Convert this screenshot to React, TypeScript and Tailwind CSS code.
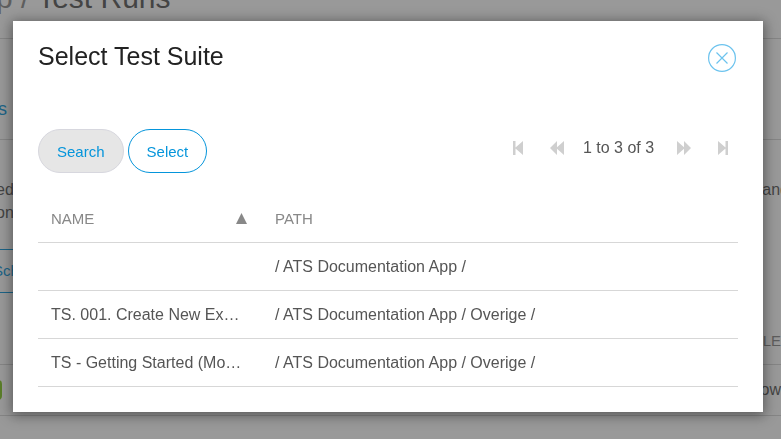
import React from "react";

const rows = [
  { name: "", path: "/ ATS Documentation App /" },
  { name: "TS. 001. Create New Ex…", path: "/ ATS Documentation App / Overige /" },
  { name: "TS - Getting Started (Mo…", path: "/ ATS Documentation App / Overige /" },
];

function PagerButton({ label, path, width }: { label: string; path: string; width: number }) {
  return (
    <button type="button" aria-label={label} disabled className="flex h-6 items-center text-[#cfcfcf]">
      <svg width={width} height="14" viewBox={`0 0 ${width} 14`} fill="currentColor">
        <path d={path} />
      </svg>
    </button>
  );
}

function PageBehind() {
  return (
    <div aria-hidden="true" className="flex h-screen flex-col overflow-hidden text-base text-[#555]">
      <div className="flex h-[39px] shrink-0 items-end border-b border-[#d7d7d7] pb-[22px]">
        <div className="-ml-1 text-[30px] leading-9 text-[#555]">
          <span className="text-[#888]">p / </span>Test Runs
        </div>
      </div>
      <div className="flex h-[101px] shrink-0 items-end border-b border-[#d7d7d7] pb-5 text-lg leading-5 text-[#0595db]">
        <span className="-ml-0.5">s</span>
      </div>
      <div className="flex h-[109px] shrink-0 justify-between pt-[38px] leading-[23px]">
        <div className="-ml-1">
          ed
          <br />
          on
        </div>
        <div className="-mr-2">and</div>
      </div>
      <div className="-ml-10 flex h-11 w-40 shrink-0 items-center rounded-full border border-[#0595db] pl-8 text-[15px] text-[#0595db]">
        Sch
      </div>
      <div className="flex h-[72px] shrink-0 items-end justify-end border-b border-[#d7d7d7] pb-3 text-[15px] text-[#888]">
        LE
      </div>
      <div className="flex h-[51px] shrink-0 items-center justify-between border-b border-[#d7d7d7]">
        <div className="-ml-4 h-5 w-[18px] rounded bg-[#82c91e]" />
        <div className="-mr-2">ows</div>
      </div>
    </div>
  );
}

export default function App() {
  return (
    <div className="bg-white font-['Liberation_Sans',Arial,sans-serif]">
      <PageBehind />
      <div className="fixed inset-0 bg-[#333]/50 pt-[21px] pr-[18px] pl-[13px]">
        <div
          role="dialog"
          aria-modal="true"
          aria-labelledby="dialog-title"
          className="bg-white p-[25px] pt-[22px] text-base text-[#555] shadow-[0_2px_12px_2px_rgba(0,0,0,0.4)]"
        >
          <header className="flex items-start justify-between pr-0.5">
            <h1 id="dialog-title" className="text-[25px] leading-[26px] text-[#222]">
              Select Test Suite
            </h1>
            <button type="button" aria-label="Close" className="mt-px text-[#6cc3ee]">
              <svg width="28" height="28" viewBox="0 0 28 28" fill="none" stroke="currentColor" strokeWidth="1.2">
                <circle cx="14" cy="14" r="13.4" />
                <path d="M8.5 8.5l11 11M19.5 8.5l-11 11" />
              </svg>
            </button>
          </header>

          <div className="mt-[57px] flex items-start justify-between">
            <div className="flex gap-1 text-[15px] text-[#0595db]">
              <button type="button" className="h-11 rounded-full border border-[#d7d7de] bg-[#e6e6e6] px-[18px] pt-0.5">
                Search
              </button>
              <button type="button" className="h-11 rounded-full border border-[#0595db] px-[18px] pt-0.5">
                Select
              </button>
            </div>
            <nav aria-label="Pagination" className="flex items-center pt-[7px] pr-2.5">
              <PagerButton label="First page" width={10} path="M0 0h2.5v6.5L10 0v14L2.5 7.5V14H0z" />
              <span className="w-[27px]" />
              <PagerButton label="Previous page" width={14} path="M0 7l7-7v6.2L14 0v14L7 7.8V14z" />
              <span className="w-[113px] pr-1 text-center">1 to 3 of 3</span>
              <PagerButton label="Next page" width={14} path="M14 7L7 0v6.2L0 0v14l7-6.2V14z" />
              <span className="w-[27px]" />
              <PagerButton label="Last page" width={10} path="M10 0H7.5v6.5L0 0v14l7.5-6.5V14H10z" />
            </nav>
          </div>

          <table className="mt-[21px] w-full table-fixed border-collapse text-left">
            <thead>
              <tr className="h-12 border-b border-[#d7d7d7] text-[15px] text-[#888]">
                <th scope="col" aria-sort="ascending" className="w-56 px-[13px] pt-0.5 font-normal">
                  <div className="flex items-center justify-between">
                    NAME
                    <svg width="11" height="11" viewBox="0 0 11 11" fill="currentColor" className="mr-0.5">
                      <path d="M5.5 0L11 11H0z" />
                    </svg>
                  </div>
                </th>
                <th scope="col" className="px-[13px] pt-0.5 font-normal">
                  PATH
                </th>
              </tr>
            </thead>
            <tbody>
              {rows.map((row) => (
                <tr key={row.name} className="h-12 border-b border-[#d7d7d7]">
                  <td className="truncate px-[13px] pt-0.5">{row.name}</td>
                  <td className="truncate px-[13px] pt-0.5">{row.path}</td>
                </tr>
              ))}
            </tbody>
          </table>
        </div>
      </div>
    </div>
  );
}
